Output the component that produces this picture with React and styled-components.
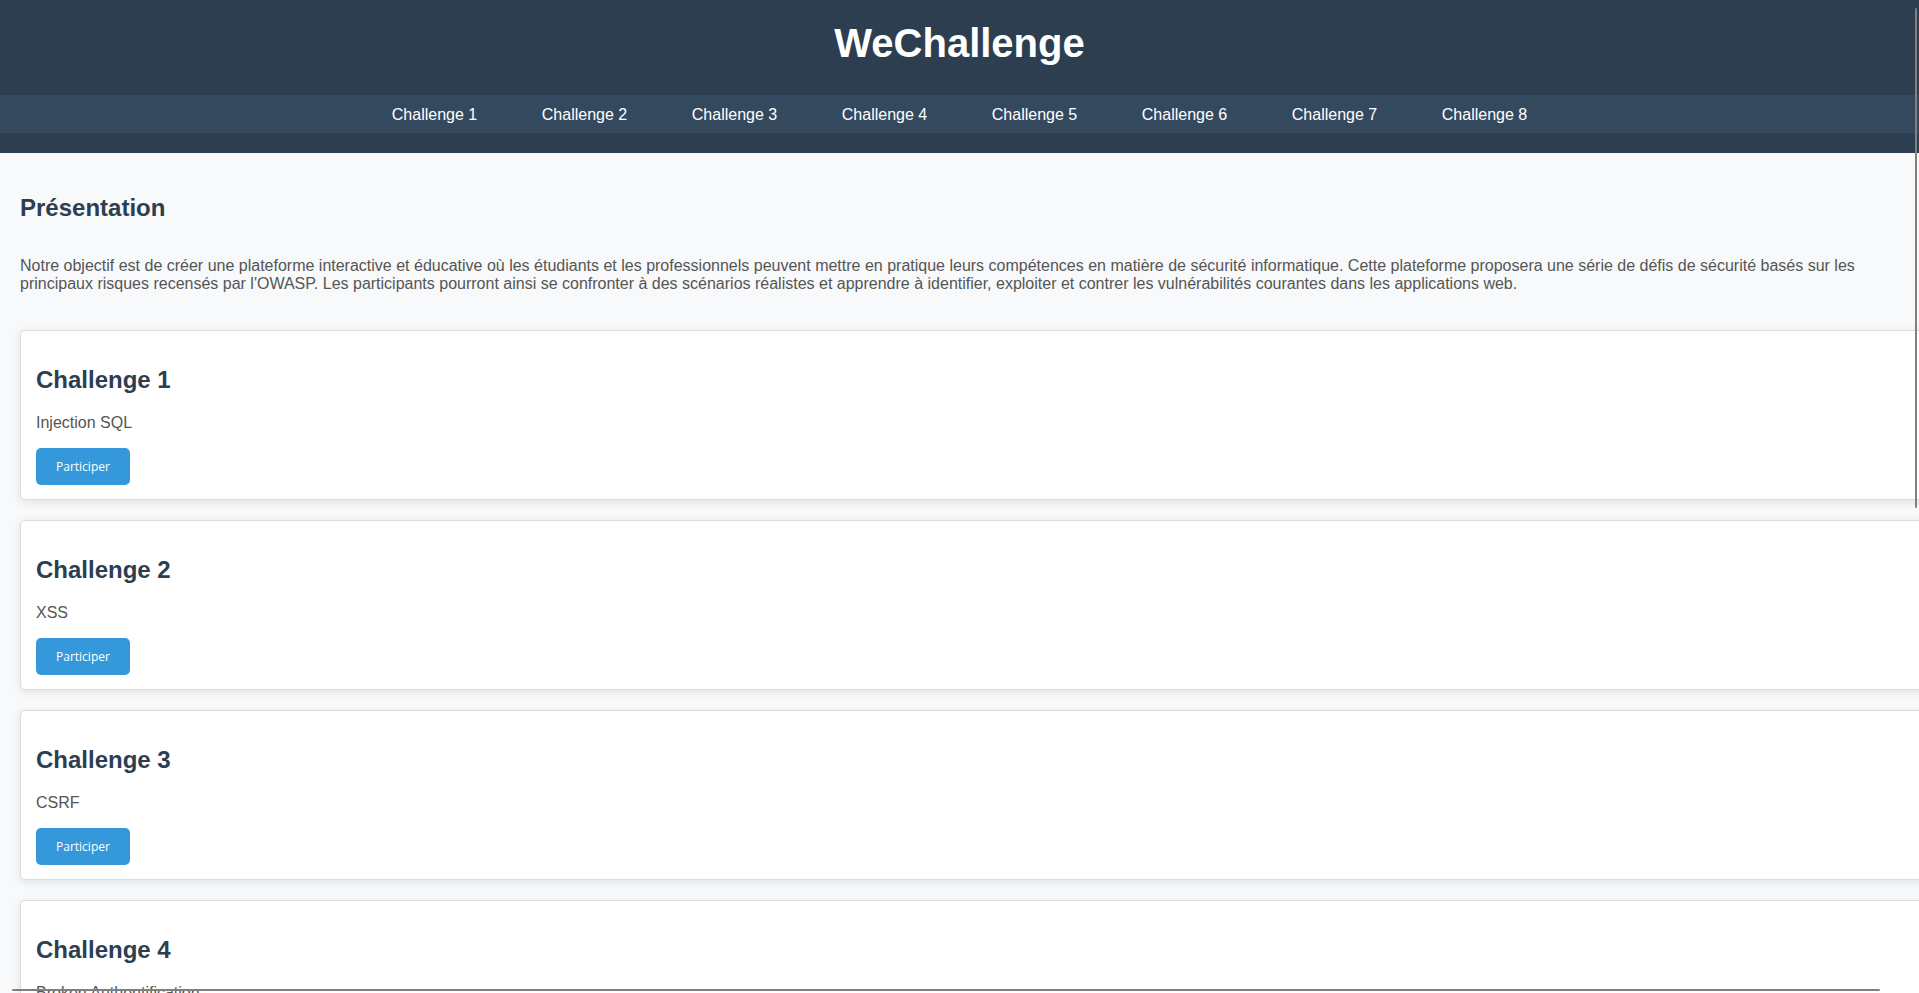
import React from "react"
import styled, { createGlobalStyle } from "styled-components"

const challenges = [
  { id: 1, name: "Injection SQL" },
  { id: 2, name: "XSS" },
  { id: 3, name: "CSRF" },
  { id: 4, name: "Broken Authentification" },
  { id: 5, name: "Sensitive Data Exposure" },
  { id: 6, name: "Security Misconfiguration" },
  { id: 7, name: "Broken Access Control" },
  { id: 8, name: "Insecure Deserialization" },
]

export default function App() {
  return (
    <>
      <GlobalStyle />
      <Header>
        <Title>WeChallenge</Title>
        <Nav>
          {challenges.map((c) => (
            <NavLink key={c.id} href={`#challenge${c.id}`}>
              Challenge {c.id}
            </NavLink>
          ))}
        </Nav>
      </Header>
      <Main>
        <Intro>
          <SectionTitle>Présentation</SectionTitle>
          <Text>
            Notre objectif est de créer une plateforme interactive et éducative où les étudiants et les
            professionnels peuvent mettre en pratique leurs compétences en matière de sécurité informatique.
            Cette plateforme proposera une série de défis de sécurité basés sur les principaux risques recensés
            par l'OWASP. Les participants pourront ainsi se confronter à des scénarios réalistes et apprendre à
            identifier, exploiter et contrer les vulnérabilités courantes dans les applications web.
          </Text>
        </Intro>
        <CardList>
          {challenges.map((c) => (
            <Card key={c.id} id={`challenge${c.id}`}>
              <CardTitle>Challenge {c.id}</CardTitle>
              <Text>{c.name}</Text>
              <Button>Participer</Button>
            </Card>
          ))}
        </CardList>
      </Main>
      <ScrollThumb className="vertical" />
      <ScrollThumb className="horizontal" />
    </>
  )
}

const GlobalStyle = createGlobalStyle`
  html {
    overflow: hidden;
  }
  body {
    margin: 0;
    background: #f8f9fa;
    font-family: "Liberation Sans", Arial, sans-serif;
    color: #555;
  }
`
const Header = styled.header`
  background: #2c3e50;
  padding: 21px 0 20px;
  text-align: center;
`
const Title = styled.h1`
  margin: 0 0 29px;
  color: #fff;
  font-size: 40px;
  font-weight: bold;
`
const Nav = styled.nav`
  display: flex;
  justify-content: center;
  gap: 64.6px;
  background: #34495e;
  padding: 11px 0 9px;
`
const NavLink = styled.a`
  color: #fff;
  text-decoration: none;
  font-size: 16px;
`
const Main = styled.main`
  padding: 21px 20px 0;
`
const Intro = styled.section``
const SectionTitle = styled.h2`
  margin: 20px 0 35px;
  font-size: 24px;
  color: #2c3e50;
`
const Text = styled.p`
  margin: 0;
  font-size: 16px;
  color: #555;
`
const CardList = styled.div`
  display: flex;
  flex-direction: column;
  gap: 20px;
  margin-top: 37px;
`
const Card = styled.div`
  width: 100%;
  flex-shrink: 0;
  background: #fff;
  border: 1px solid #dcdcdc;
  border-radius: 5px;
  padding: 15px 15px 14px;
  box-shadow: 0 2px 8px rgba(0, 0, 0, 0.1);

  ${Text} {
    margin: 0 0 16px;
  }
`
const CardTitle = styled.h2`
  margin: 20px 0;
  font-size: 24px;
  color: #2c3e50;
`
const Button = styled.button`
  background: #3498db;
  color: #fff;
  border: none;
  border-radius: 5px;
  padding: 10px 20px;
  font-family: "Open Sans", sans-serif;
  font-size: 12px;
  cursor: pointer;
`
const ScrollThumb = styled.div`
  position: fixed;
  background: #808080;
  border-radius: 1px;

  &.vertical {
    top: 8px;
    right: 2px;
    width: 2px;
    height: 500px;
  }
  &.horizontal {
    bottom: 2px;
    left: 12px;
    width: 1868px;
    height: 2px;
  }
`
